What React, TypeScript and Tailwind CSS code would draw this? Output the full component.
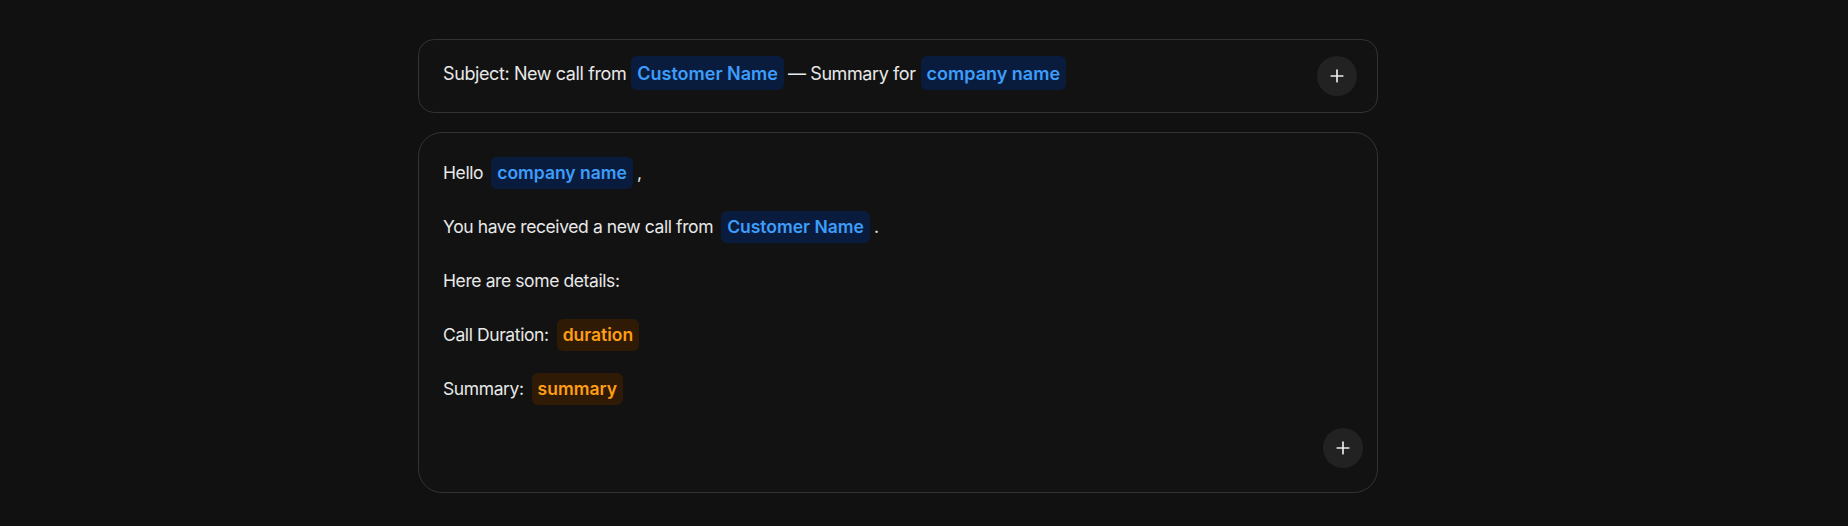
import React from 'react';
import { Plus } from 'lucide-react';

type ChipProps = { label: string; tone?: 'blue' | 'orange'; size?: 'lg' | 'md'; className?: string };

const Chip = ({ label, tone = 'blue', size = 'md', className = '' }: ChipProps) => (
    <span
        className={`inline-flex items-center rounded-md px-1.5 font-semibold tracking-normal ${size === 'lg' ? 'h-[34px]' : 'h-8'} ${
            tone === 'blue' ? 'bg-[#0a1c3d] text-[#3d9dfb]' : 'bg-[#2f1b05] text-[#ff9d14]'
        } ${className}`}
    >
        {label}
    </span>
);

const AddButton = () => (
    <button className="flex h-10 w-10 shrink-0 items-center justify-center rounded-full bg-[#222222] text-[#ececec]">
        <Plus size={20} strokeWidth={2} />
    </button>
);

const App = () => {
    return (
        <div className="min-h-screen bg-[#111111] pt-[39px] font-['Inter',sans-serif] tracking-tight text-[#e8e8e8]">
            <div className="mx-auto w-[1012px]">
                {/* Subject line */}
                <div className="flex w-[960px] items-start justify-between rounded-2xl border border-[#333333] bg-[#121212] py-4 pl-6 pr-5 text-[18px]">
                    <div className="flex h-[34px] items-center">
                        <span>Subject: New call from</span>
                        <Chip label="Customer Name" size="lg" className="ml-[5px]" />
                        <span className="ml-1">— Summary for</span>
                        <Chip label="company name" size="lg" className="ml-[5px]" />
                    </div>
                    <AddButton />
                </div>

                {/* Email body */}
                <div className="mt-[19px] flex w-[960px] flex-col rounded-3xl border border-[#333333] bg-[#121212] py-6 pl-6 pr-3.5 text-[17.5px]">
                    <div className="flex flex-col gap-[22px]">
                        <div className="flex h-8 items-center">
                            <span>Hello</span>
                            <Chip label="company name" className="ml-2" />
                            <span className="ml-1">,</span>
                        </div>
                        <div className="flex h-8 items-center">
                            <span>You have received a new call from</span>
                            <Chip label="Customer Name" className="ml-2" />
                            <span className="ml-1">.</span>
                        </div>
                        <div className="flex h-8 items-center">
                            <span>Here are some details:</span>
                        </div>
                        <div className="flex h-8 items-center">
                            <span>Call Duration:</span>
                            <Chip label="duration" tone="orange" className="ml-2" />
                        </div>
                        <div className="flex h-8 items-center">
                            <span>Summary:</span>
                            <Chip label="summary" tone="orange" className="ml-2" />
                        </div>
                    </div>
                    <div className="mt-[23px] flex justify-end">
                        <AddButton />
                    </div>
                </div>
            </div>
        </div>
    );
};

export default App;
